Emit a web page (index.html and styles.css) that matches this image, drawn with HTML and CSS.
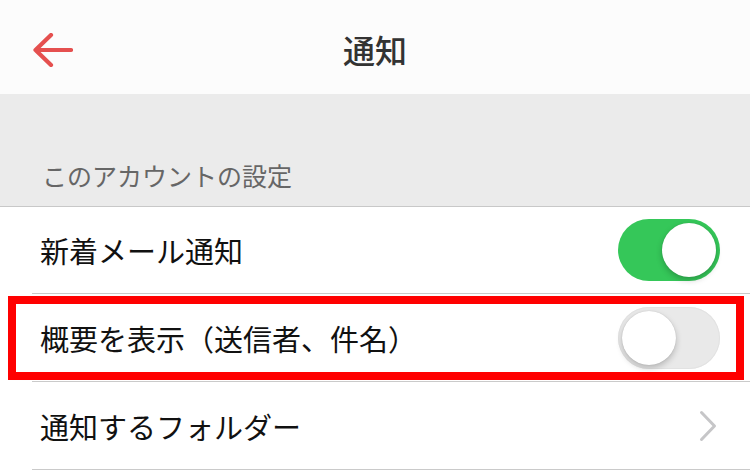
FILE: index.html
```html
<!DOCTYPE html>
<html lang="ja">
<head>
<meta charset="utf-8">
<title>通知</title>
<link rel="stylesheet" href="styles.css">
</head>
<body>
<div class="screen">
  <header class="nav">
    <svg class="back" width="40" height="34" viewBox="0 0 40 34">
      <path d="M18 2 L2.5 17 L18 32 M2.5 17 L38 17" fill="none" stroke="#e5504f" stroke-width="4.2" stroke-linecap="round" stroke-linejoin="round"/>
    </svg>
    <h1 class="title">通知</h1>
  </header>
  <div class="section-head"><span class="section-label">このアカウントの設定</span></div>
  <div class="list">
    <div class="row row-first">
      <span class="row-text">新着メール通知</span>
      <div class="toggle toggle-on"><div class="knob"></div></div>
    </div>
    <div class="row row-marked">
      <span class="row-text">概要を表示（送信者、件名）</span>
      <div class="toggle toggle-off"><div class="knob"></div></div>
      <div class="highlight"></div>
    </div>
    <div class="row">
      <span class="row-text">通知するフォルダー</span>
      <svg class="chevron" width="18" height="32" viewBox="0 0 18 32">
        <path d="M2.5 2.5 L15.5 16 L2.5 29.5" fill="none" stroke="#c6c6c8" stroke-width="3" stroke-linecap="round" stroke-linejoin="round"/>
      </svg>
    </div>
  </div>
</div>
</body>
</html>
```
FILE: styles.css
```css
html, body {
  margin: 0;
  padding: 0;
  background: #ffffff;
}
.screen {
  width: 750px;
  height: 470px;
  overflow: hidden;
  font-family: "Noto Sans CJK JP", "Noto Sans", sans-serif;
}
.nav {
  height: 94px;
  background: #fcfcfc;
  display: flex;
  align-items: center;
  justify-content: center;
  position: relative;
}
.back {
  position: absolute;
  left: 33px;
  top: 33px;
}
.title {
  margin: 0;
  font-size: 32px;
  font-weight: 500;
  color: #333333;
  line-height: 40px;
  padding-top: 4px;
}
.section-head {
  height: 112px;
  background: #ebebeb;
  border-bottom: 1px solid #c8c8c8;
  display: flex;
  align-items: flex-end;
  padding-left: 42px;
  box-sizing: content-box;
}
.section-label {
  font-size: 25px;
  color: #666666;
  line-height: 36px;
  padding-bottom: 13px;
}
.list {
  display: flex;
  flex-direction: column;
}
.row {
  margin-left: 32px;
  height: 88px;
  box-sizing: border-box;
  border-bottom: 1px solid #cacaca;
  display: flex;
  align-items: center;
  justify-content: space-between;
  padding-left: 8px;
  padding-right: 30px;
  position: relative;
}
.row-first {
  height: 87px;
}
.row-text {
  font-size: 29px;
  color: #111111;
  line-height: 40px;
  font-weight: 400;
}
.toggle {
  width: 102px;
  height: 62px;
  border-radius: 31px;
  box-sizing: border-box;
  display: flex;
  align-items: center;
  padding: 4px;
}
.toggle-on {
  background: #35c759;
  justify-content: flex-end;
}
.toggle-off {
  background: #e9e9e9;
  box-shadow: inset 0 0 0 1px #e2e2e2;
  justify-content: flex-start;
}
.knob {
  width: 54px;
  height: 54px;
  border-radius: 50%;
  background: #ffffff;
  box-shadow: 0 3px 6px rgba(0, 0, 0, 0.22), 0 0 1px rgba(0, 0, 0, 0.2);
}
.chevron {
  margin-right: 3px;
}
.highlight {
  position: absolute;
  left: -24px;
  top: 2px;
  width: 736px;
  height: 84px;
  border: 8px solid #ff0000;
  box-sizing: border-box;
  pointer-events: none;
}
```
